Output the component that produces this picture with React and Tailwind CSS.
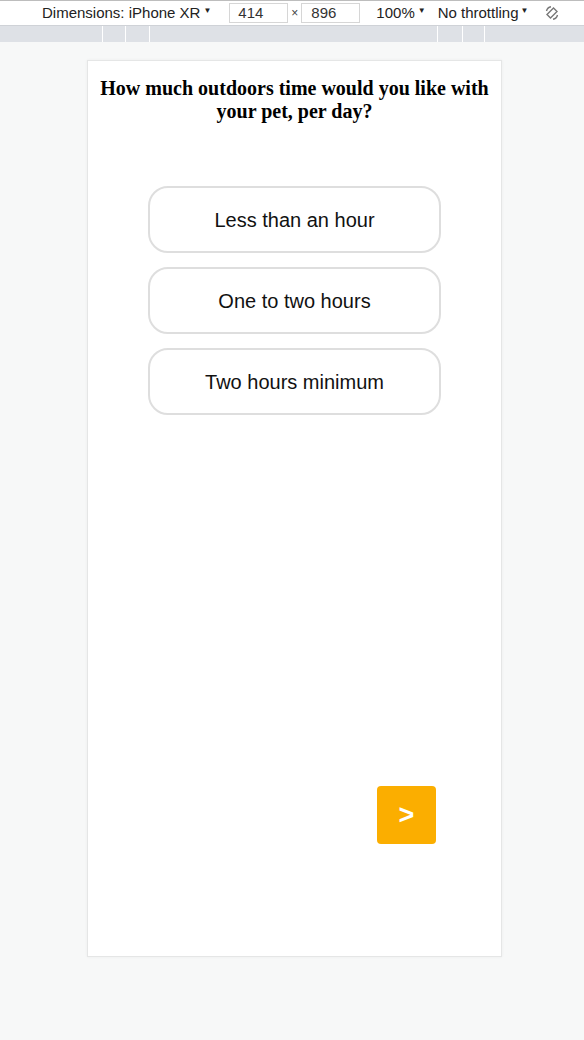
import React, { useState } from "react";

const options = ["Less than an hour", "One to two hours", "Two hours minimum"];

const Toolbar = () => (
  <div className="font-['Liberation_Sans',Arial,sans-serif] text-[15px] text-[#222]">
    <div className="h-[25px] bg-white border-t border-[#bdbdbd] flex items-center">
      <span className="ml-[42px]">Dimensions: iPhone XR</span>
      <span className="text-[8px] ml-[3px] -mt-[4px]">▼</span>
      <div className="ml-[18px] w-[59px] h-[20px] border border-[#d6d6d6] text-[#333] pl-[8px] leading-[18px]">414</div>
      <span className="mx-[3px] text-[12px] text-[#444]">×</span>
      <div className="w-[59px] h-[20px] border border-[#d6d6d6] text-[#333] pl-[9px] leading-[18px]">896</div>
      <span className="ml-[16px]">100%</span>
      <span className="text-[8px] ml-[3px] -mt-[4px]">▼</span>
      <span className="ml-[12px]">No throttling</span>
      <span className="text-[8px] ml-[2px] -mt-[4px]">▼</span>
      <svg className="ml-[16px]" width="16" height="16" viewBox="0 0 16 16" fill="none" stroke="#777" strokeWidth="1.4">
        <path d="M3 9.5 L9.5 3 L13 6.5 L6.5 13 Z" />
        <path d="M2.5 6 A5.5 5.5 0 0 1 7 1.8" />
        <path d="M13.5 10 A5.5 5.5 0 0 1 9 14.2" />
      </svg>
    </div>
    <div className="h-[17px] bg-[#dee1e6] border-t border-[#cfd2d7] flex">
      <div className="w-[103px] border-r border-white" />
      <div className="w-[23px] border-r border-white" />
      <div className="w-[24px] border-r border-white" />
      <div className="w-[288px] border-r border-white" />
      <div className="w-[25px] border-r border-white" />
      <div className="w-[22px] border-r border-white" />
      <div className="flex-1" />
    </div>
  </div>
);

export default function App() {
  const [picked, setPicked] = useState(null);
  return (
    <div className="min-h-[1040px] bg-[#f7f8f8]">
      <Toolbar />
      <div className="pt-[18px] pb-[83px] pl-[87px]">
        <div className="w-[415px] h-[897px] bg-white border border-[#e5e6e6] shadow-[0_0_3px_rgba(0,0,0,0.05)] flex flex-col">
          <h1 className="mt-[16px] px-[8px] text-center font-['Liberation_Serif','Times_New_Roman',serif] font-bold text-[20px] leading-[23px] text-black">
            How much outdoors time would you like with your pet, per day?
          </h1>
          <div className="mt-[63px] flex flex-col items-center gap-[14px]">
            {options.map((o, i) => (
              <button
                key={o}
                onClick={() => setPicked(i)}
                className={`w-[293px] h-[67px] rounded-[20px] border-2 ${picked === i ? "border-[#fbae00]" : "border-[#dedede]"} bg-white font-['Liberation_Sans',Arial,sans-serif] text-[20px] text-[#111]`}
              >
                {o}
              </button>
            ))}
          </div>
          <div className="mt-[371px] flex justify-end pr-[65px]">
            <button className="w-[59px] h-[58px] rounded-[4px] bg-[#fbae00] text-white font-['Liberation_Sans',Arial,sans-serif] font-bold text-[27px] leading-none">
              &gt;
            </button>
          </div>
        </div>
      </div>
    </div>
  );
}
